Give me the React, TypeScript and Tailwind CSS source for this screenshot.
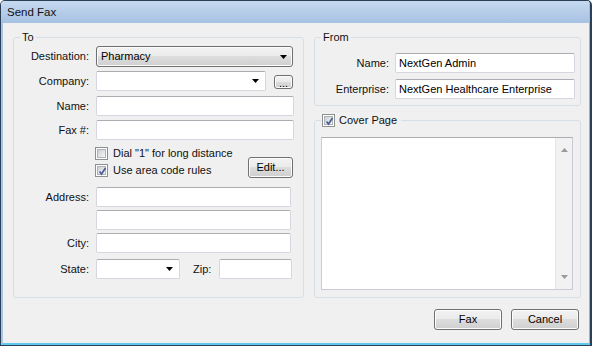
import type { ReactNode } from 'react';
import clsx from 'clsx';

// win7 style pieces
function Arrow() {
  return (
    <svg width="7" height="4" viewBox="0 0 7 4" className="shrink-0">
      <path d="M0 0 H7 L3.5 4 Z" fill="#000" />
    </svg>
  );
}

function Btn({ className, children }: { className?: string; children: ReactNode }) {
  return (
    <div
      className={clsx(
        'flex items-center justify-center border border-[#707070] rounded-[3px] shadow-[inset_0_0_0_1px_#fcfcfc] bg-[linear-gradient(180deg,#f2f2f2_0%,#ebebeb_45%,#dddddd_50%,#cfcfcf_100%)] text-black',
        className,
      )}
    >
      {children}
    </div>
  );
}

function TextBox({ className, value }: { className?: string; value?: string }) {
  return (
    <div
      className={clsx(
        'h-[20px] flex items-center pl-[3px] bg-white border border-[#d4d8de] border-t-[#abadb3] rounded-[2px] text-black whitespace-nowrap',
        className,
      )}
    >
      {value}
    </div>
  );
}

function ComboBox({ className }: { className?: string }) {
  return (
    <div
      className={clsx(
        'h-[20px] flex items-center justify-end pr-[6px] bg-white border border-[#d4d8de] border-t-[#abadb3] rounded-[2px]',
        className,
      )}
    >
      <Arrow />
    </div>
  );
}

function Check({ checked }: { checked?: boolean }) {
  return (
    <span className="relative block w-[13px] h-[13px] shrink-0 border border-[#8e8f8f] bg-white p-[1px]">
      <span className="block w-full h-full border border-[#aeb3b9] bg-[linear-gradient(135deg,#cbcfd5,#f6f6f6)]" />
      {checked && (
        <svg className="absolute inset-0" width="13" height="13" viewBox="0 0 13 13">
          <path d="M3.5 6.5 L5.5 9 L9.5 3" stroke="#4a5f97" strokeWidth="1.7" fill="none" />
        </svg>
      )}
    </span>
  );
}

function Label({ className, children }: { className?: string; children: ReactNode }) {
  return <span className={clsx('shrink-0 text-right whitespace-nowrap', className)}>{children}</span>;
}

export default function App() {
  return (
    <div className="w-[592px] h-[346px] flex flex-col border border-r-2 border-[#2b3f57] rounded-t-[5px] overflow-hidden text-[11px] leading-[15px] text-[#111] font-['Liberation_Sans',Arial,sans-serif]">
      <div className="h-[22px] shrink-0 flex items-center pl-[6px] text-[11.5px] bg-[linear-gradient(180deg,#c6d9ef,#a6c1e3)] border-r border-[#6fcff0]">
        Send Fax
      </div>

      <div className="flex-1 flex flex-col bg-[#f0f0f0] border-l-2 border-l-[#a9c5e6] border-r border-r-[#5ec8ee] border-b-2 border-b-[#5ec8ee]">
        <div className="flex items-start gap-[10px] pl-[10px] pt-[7px]">
          {/* To */}
          <fieldset className="w-[291px] h-[268px] border border-[#d5dfe5] rounded-[3px]">
            <legend className="ml-[6px] px-[2px] leading-[15px]">To</legend>

            <div className="mt-[1px] flex items-center">
              <Label className="w-[75px]">Destination:</Label>
              <Btn className="ml-[7px] w-[197px] h-[21px] !justify-between pl-[4px] pr-[5px]">
                <span>Pharmacy</span>
                <Arrow />
              </Btn>
            </div>

            <div className="mt-[4px] flex items-center">
              <Label className="w-[75px]">Company:</Label>
              <ComboBox className="ml-[7px] w-[170px]" />
              <Btn className="ml-[8px] w-[19px] h-[14px] mt-[2px] !items-end leading-[10px]">...</Btn>
            </div>

            <div className="mt-[5px] flex items-center">
              <Label className="w-[75px]">Name:</Label>
              <TextBox className="ml-[7px] w-[198px]" />
            </div>

            <div className="mt-[4px] flex items-center">
              <Label className="w-[75px]">Fax #:</Label>
              <TextBox className="ml-[7px] w-[198px]" />
            </div>

            <div className="mt-[5px] flex">
              <div className="ml-[81px] flex flex-col">
                <div className="h-[17px] flex items-center gap-[5px]">
                  <Check />
                  <span>Dial "1" for long distance</span>
                </div>
                <div className="h-[17px] flex items-center gap-[5px]">
                  <Check checked />
                  <span>Use area code rules</span>
                </div>
              </div>
              <Btn className="ml-auto mr-[10px] mb-[1px] self-end w-[45px] h-[21px]">Edit...</Btn>
            </div>

            <div className="mt-[8px] flex items-center">
              <Label className="w-[75px]">Address:</Label>
              <TextBox className="ml-[7px] w-[195px]" />
            </div>
            <TextBox className="mt-[3px] ml-[82px] w-[195px]" />

            <div className="mt-[3px] flex items-center">
              <Label className="w-[75px]">City:</Label>
              <TextBox className="ml-[7px] w-[195px]" />
            </div>

            <div className="mt-[6px] flex items-center">
              <Label className="w-[75px]">State:</Label>
              <ComboBox className="ml-[7px] w-[84px]" />
              <span className="ml-[13px]">Zip:</span>
              <TextBox className="ml-auto mr-[11px] w-[73px]" />
            </div>
          </fieldset>

          <div className="w-[267px] flex flex-col">
            {/* From */}
            <fieldset className="h-[76px] border border-[#d5dfe5] rounded-[3px]">
              <legend className="ml-[6px] px-[2px] leading-[15px]">From</legend>
              <div className="mt-[8px] flex items-center">
                <Label className="w-[74px]">Name:</Label>
                <TextBox className="ml-[6px] w-[180px]" value="NextGen Admin" />
              </div>
              <div className="mt-[6px] flex items-center">
                <Label className="w-[74px]">Enterprise:</Label>
                <TextBox className="ml-[6px] w-[180px]" value="NextGen Healthcare Enterprise" />
              </div>
            </fieldset>

            {/* Cover page */}
            <fieldset className="mt-[7px] h-[185px] border border-[#d5dfe5] rounded-[3px]">
              <legend className="ml-[6px] pl-[1px] pr-[4px] leading-[15px] flex items-center gap-[4px]">
                <Check checked />
                <span>Cover Page</span>
              </legend>
              <div className="mt-[9px] ml-[6px] w-[252px] h-[153px] flex bg-white border border-[#c9ccd2] border-t-[#abadb3]">
                <div className="flex-1" />
                <div className="w-[17px] flex flex-col items-center justify-between py-[10px] bg-[#f2f2f2] border-l border-[#e6e6e6]">
                  <svg width="7" height="4" viewBox="0 0 7 4">
                    <path d="M0 4 H7 L3.5 0 Z" fill="#9a9a9a" />
                  </svg>
                  <svg width="7" height="4" viewBox="0 0 7 4">
                    <path d="M0 0 H7 L3.5 4 Z" fill="#9a9a9a" />
                  </svg>
                </div>
              </div>
            </fieldset>
          </div>
        </div>

        <div className="mt-[11px] pr-[10px] flex justify-end gap-[9px]">
          <Btn className="w-[68px] h-[21px]">Fax</Btn>
          <Btn className="w-[68px] h-[21px]">Cancel</Btn>
        </div>
      </div>
    </div>
  );
}
